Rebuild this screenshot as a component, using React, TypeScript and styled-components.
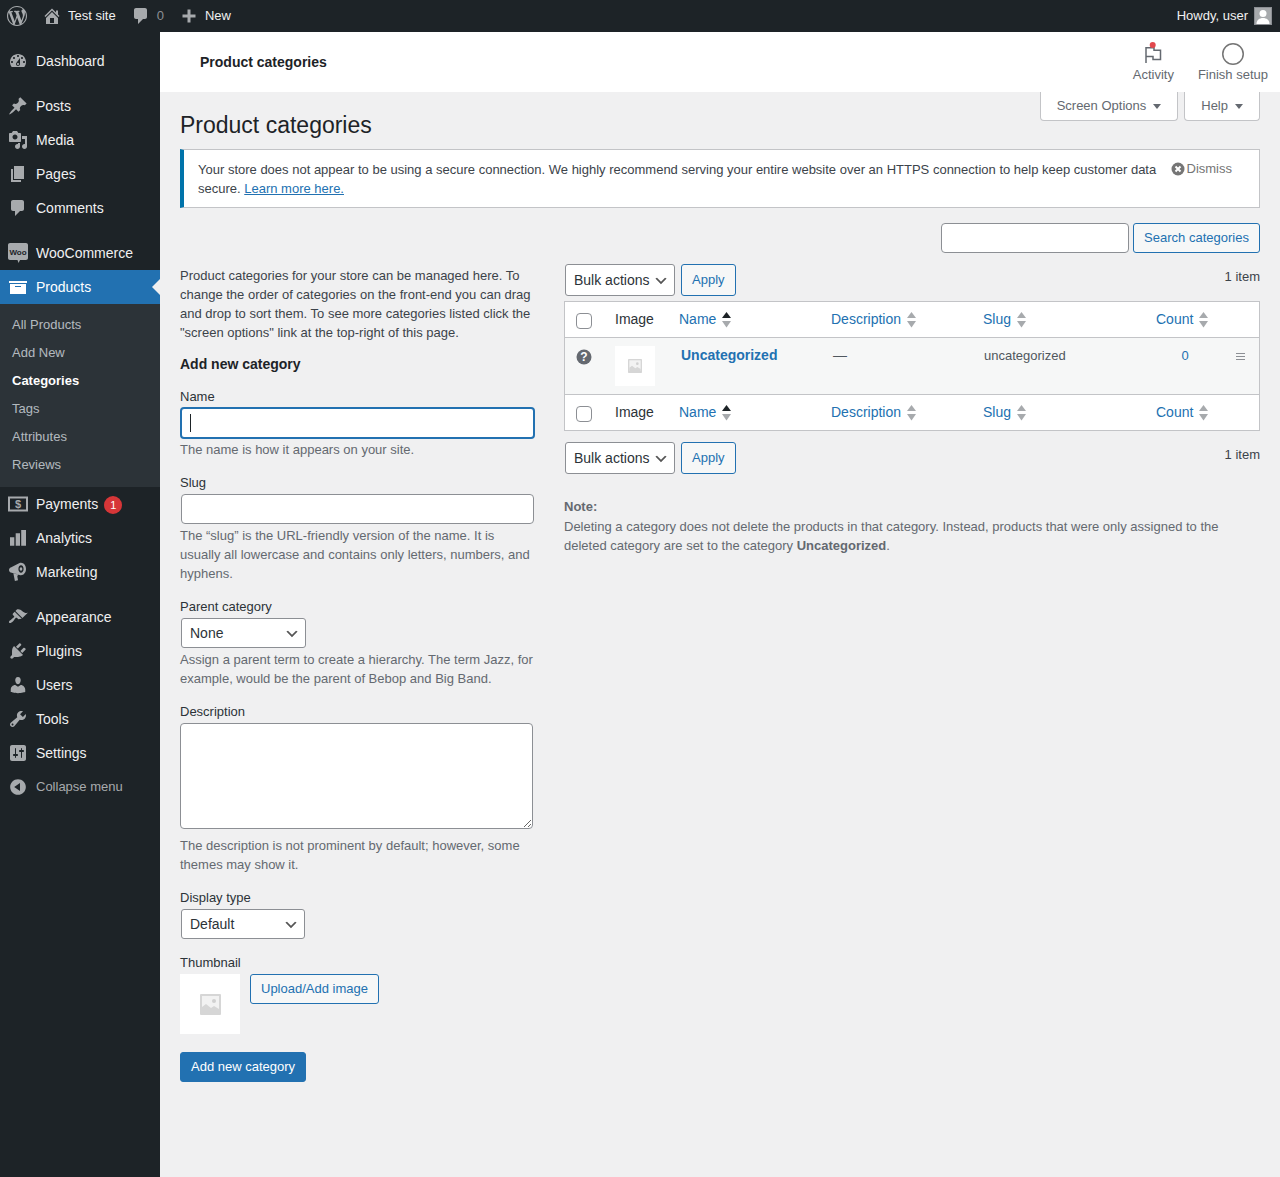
import { ReactNode } from 'react';
import styled, { createGlobalStyle } from 'styled-components';

const GlobalStyle = createGlobalStyle`
  html, body {
    margin: 0;
    padding: 0;
    background: #f0f0f1;
    font-family: "Liberation Sans", Arial, sans-serif;
    font-size: 13px;
    line-height: 19px;
    color: #3c434a;
  }
  * {
    box-sizing: border-box;
  }
`;

const chevron =
  "url(\"data:image/svg+xml,%3Csvg xmlns='http://www.w3.org/2000/svg' width='20' height='20' viewBox='0 0 20 20'%3E%3Cpath d='M5 6l5 5 5-5 2 1-7 7-7-7 2-1z' fill='%23555'/%3E%3C/svg%3E\")";

const Page = styled.div`
  min-height: 100vh;
  display: flex;
  flex-direction: column;
`;

const AdminBar = styled.header`
  flex: none;
  height: 32px;
  background: #1d2327;
  color: #f0f0f1;
  display: flex;
  align-items: center;
  padding: 0 8px 0 7px;
`;

const BarItem = styled.a<{ $left: number }>`
  display: flex;
  align-items: center;
  margin-left: ${(p) => p.$left}px;
  gap: 6px;
  color: #f0f0f1;
  svg {
    fill: #a7aaad;
    display: block;
  }
`;

const BarText = styled.span<{ $dim?: boolean }>`
  margin-top: -1px;
  color: ${(p) => (p.$dim ? '#8c8f94' : 'inherit')};
`;

const Howdy = styled.div`
  margin-left: auto;
  display: flex;
  align-items: center;
  gap: 6px;
`;

const Avatar = styled.span`
  width: 18px;
  height: 18px;
  background: #a7aaad;
  border: 1px solid #8c8f94;
  svg {
    display: block;
  }
`;

const Body = styled.div`
  flex: 1;
  display: flex;
`;

const Sidebar = styled.nav`
  flex: none;
  width: 160px;
  background: #1d2327;
  padding-top: 12px;
`;

const MenuItem = styled.a<{ $gap?: boolean; $active?: boolean }>`
  position: relative;
  display: flex;
  align-items: center;
  height: 34px;
  margin-top: ${(p) => (p.$gap ? 11 : 0)}px;
  font-size: 14px;
  color: ${(p) => (p.$active ? '#fff' : '#f0f0f1')};
  background: ${(p) => (p.$active ? '#2271b1' : 'transparent')};
  svg {
    fill: ${(p) => (p.$active ? '#fff' : '#a7aaad')};
  }
  ${(p) =>
    p.$active &&
    `&::after {
      content: '';
      position: absolute;
      right: 0;
      top: 9px;
      border: 8px solid transparent;
      border-right-color: #f0f0f1;
      border-left-width: 0;
    }`}
`;

const MenuIcon = styled.span`
  flex: none;
  width: 36px;
  display: flex;
  justify-content: center;
  svg {
    display: block;
  }
`;

const Badge = styled.span`
  width: 18px;
  height: 18px;
  margin: 2px 0 0 6px;
  border-radius: 50%;
  background: #d63638;
  color: #fff;
  font-size: 11px;
  line-height: 18px;
  text-align: center;
`;

const SubMenu = styled.div`
  background: #2c3338;
  padding: 7px 0;
  height: 183px;
`;

const SubItem = styled.a<{ $current?: boolean }>`
  display: block;
  height: 28px;
  line-height: 28px;
  padding-left: 12px;
  color: ${(p) => (p.$current ? '#fff' : 'rgba(240, 246, 252, 0.7)')};
  font-weight: ${(p) => (p.$current ? 600 : 400)};
`;

const Collapse = styled.a`
  display: flex;
  align-items: center;
  height: 32px;
  color: #a7aaad;
  svg {
    fill: #a7aaad;
    margin-top: 2px;
  }
`;

const Content = styled.main`
  flex: 1;
  min-width: 0;
`;

const HeaderBar = styled.div`
  height: 60px;
  background: #fff;
  display: flex;
  align-items: flex-start;
  padding: 0 12px 0 40px;
`;

const HeaderTitle = styled.div`
  font-size: 14px;
  font-weight: 600;
  color: #1d2327;
  margin-top: 21px;
`;

const HeaderLinks = styled.div`
  margin-left: auto;
  display: flex;
  gap: 24px;
`;

const HeaderLink = styled.a`
  display: flex;
  flex-direction: column;
  align-items: center;
  color: #646970;
  line-height: 19px;
  padding-top: 11px;
  svg {
    display: block;
    overflow: visible;
  }
`;

const Wrap = styled.div`
  padding: 0 20px;
`;

const TitleRow = styled.div`
  height: 57px;
  display: flex;
  justify-content: space-between;
  align-items: flex-start;
`;

const Title = styled.h1`
  margin: 18px 0 0;
  font-size: 23px;
  font-weight: 400;
  line-height: 30px;
  color: #1d2327;
`;

const ScreenTabs = styled.div`
  display: flex;
  gap: 6px;
`;

const ScreenTab = styled.button`
  height: 29px;
  padding: 0 16px 2px;
  display: flex;
  align-items: center;
  gap: 6px;
  background: #fff;
  border: 1px solid #c3c4c7;
  border-top: 0;
  border-radius: 0 0 4px 4px;
  font: inherit;
  color: #646970;
  &::after {
    content: '';
    border: 4px solid transparent;
    border-top: 5px solid #646970;
    border-bottom: 0;
    margin: 2px 0 0 1px;
  }
`;

const Notice = styled.div`
  display: flex;
  background: #fff;
  border: 1px solid #c3c4c7;
  border-left: 4px solid #0073aa;
  padding: 10px 27px 9px 14px;
`;

const NoticeText = styled.div`
  flex: 1;
  color: #3c434a;
  a {
    color: #2271b1;
    text-decoration: underline;
  }
`;

const Dismiss = styled.a`
  flex: none;
  display: flex;
  align-items: center;
  align-self: flex-start;
  margin: -1px 0 0 14px;
  height: 19px;
  gap: 2px;
  color: #757575;
  svg {
    display: block;
  }
`;

const SearchRow = styled.div`
  display: flex;
  justify-content: flex-end;
  gap: 4px;
  margin-top: 15px;
`;

const SearchInput = styled.input`
  width: 188px;
  height: 30px;
  background: #fff;
  border: 1px solid #8c8f94;
  border-radius: 4px;
`;

const Button = styled.button`
  height: 30px;
  padding: 0 10px 2px;
  background: #f6f7f7;
  border: 1px solid #2271b1;
  border-radius: 3px;
  color: #2271b1;
  font: inherit;
`;

const SearchButton = styled(Button)`
  width: 127px;
  padding-left: 0;
  padding-right: 0;
`;

const PrimaryButton = styled(Button)`
  background: #2271b1;
  color: #fff;
`;

const Columns = styled.div`
  display: flex;
  margin-top: 11px;
`;

const LeftColumn = styled.div`
  flex: none;
  width: 384px;
  padding: 2px 29px 0 0;
`;

const RightColumn = styled.div`
  flex: 1;
  min-width: 0;
`;

const Intro = styled.p`
  margin: 0;
  padding-right: 2px;
`;

const FormTitle = styled.h2`
  margin: 13px 0 14px;
  font-size: 14px;
  font-weight: 600;
  line-height: 18px;
  color: #1d2327;
`;

const Field = styled.div`
  margin-bottom: 14px;
`;

const Label = styled.label`
  display: block;
  color: #2c3338;
`;

const Help = styled.p`
  margin: 2px 0 0;
  color: #646970;
`;

const NameHelp = styled(Help)`
  margin-top: 1px;
`;

const FocusBox = styled.div`
  position: relative;
  margin-top: 1px;
  &::after {
    content: '';
    position: absolute;
    left: 10px;
    top: 7px;
    width: 1px;
    height: 18px;
    background: #1d2327;
  }
`;

const NameInput = styled.input`
  display: block;
  width: 355px;
  height: 32px;
  background: #fff;
  border: 2px solid #2271b1;
  border-radius: 4px;
  outline: none;
`;

const TextInput = styled.input`
  display: block;
  width: 353px;
  height: 30px;
  margin: 2px 0 0 1px;
  background: #fff;
  border: 1px solid #8c8f94;
  border-radius: 4px;
`;

const Select = styled.select<{ $width: number; $height?: number }>`
  display: block;
  width: ${(p) => p.$width}px;
  height: ${(p) => p.$height ?? 30}px;
  padding: 0 24px 0 8px;
  appearance: none;
  background: #fff ${chevron} no-repeat right 5px top 55%;
  background-size: 16px 16px;
  border: 1px solid #8c8f94;
  border-radius: 3px;
  color: #2c3338;
  font-family: inherit;
  font-size: 14px;
`;

const FieldSelect = styled(Select)`
  margin: 2px 0 0 1px;
`;

const TextArea = styled.textarea`
  display: block;
  width: 353px;
  height: 106px;
  margin-top: 2px;
  background: #fff;
  border: 1px solid #8c8f94;
  border-radius: 4px;
`;

const LongHelp = styled(Help)`
  margin-top: 7px;
`;

const ThumbRow = styled.div`
  display: flex;
  gap: 10px;
  margin-top: 2px;
`;

const ThumbBox = styled.div<{ $size: number }>`
  flex: none;
  width: ${(p) => p.$size}px;
  height: ${(p) => p.$size}px;
  background: #fff;
  display: flex;
  align-items: center;
  justify-content: center;
  svg {
    display: block;
  }
`;

const SubmitRow = styled.div`
  margin-top: 18px;
`;

const TableNav = styled.div`
  display: flex;
  align-items: flex-start;
  gap: 6px;
  padding-left: 1px;
`;

const ApplyButton = styled(Button)`
  height: 32px;
`;

const ItemCount = styled.div`
  margin-left: auto;
  margin-top: 4px;
  line-height: 18px;
`;

const Table = styled.table`
  width: 100%;
  table-layout: fixed;
  border-collapse: separate;
  border-spacing: 0;
  background: #fff;
  border: 1px solid #c3c4c7;
  margin: 5px 0 11px;
`;

const HeadCell = styled.th<{ $width?: number; $foot?: boolean; $pad?: number }>`
  width: ${(p) => (p.$width ? `${p.$width}px` : 'auto')};
  height: ${(p) => (p.$foot ? 35 : 36)}px;
  padding: 0 0 0 ${(p) => p.$pad ?? 10}px;
  border-bottom: ${(p) => (p.$foot ? 'none' : '1px solid #c3c4c7')};
  font-size: 14px;
  font-weight: 400;
  text-align: left;
  color: #2c3338;
  vertical-align: middle;
`;

const CheckBox = styled.input`
  appearance: none;
  display: block;
  width: 16px;
  height: 16px;
  margin: 2px 0 0;
  background: #fff;
  border: 1px solid #8c8f94;
  border-radius: 4px;
`;

const SortLink = styled.a`
  display: inline-flex;
  align-items: center;
  gap: 6px;
  color: #2271b1;
  svg {
    display: block;
    margin-top: 1px;
  }
`;

const BodyCell = styled.td<{ $center?: boolean; $pad?: number }>`
  height: 57px;
  padding: 8px 0 0 ${(p) => p.$pad ?? 12}px;
  background: #f6f7f7;
  border-bottom: 1px solid #c3c4c7;
  vertical-align: top;
  color: #50575e;
  text-align: ${(p) => (p.$center ? 'center' : 'left')};
  svg {
    display: block;
  }
`;

const HelpMark = styled.span`
  display: block;
  margin-top: 3px;
`;

const CategoryLink = styled.a`
  font-size: 14px;
  font-weight: 600;
  color: #2271b1;
`;

const CountLink = styled.a`
  color: #2271b1;
`;

const Dash = styled.span`
  font-size: 14px;
`;

const Handle = styled.span`
  display: block;
  width: 9px;
  height: 7px;
  margin-top: 7px;
  border-top: 1px solid #8c8f94;
  border-bottom: 1px solid #8c8f94;
  position: relative;
  &::after {
    content: '';
    position: absolute;
    left: 0;
    right: 0;
    top: 2px;
    height: 1px;
    background: #8c8f94;
  }
`;

const Note = styled.div`
  margin-top: 23px;
  color: #646970;
`;

const NoteTitle = styled.strong`
  display: block;
  margin-bottom: 1px;
`;

function Dashicon({ d, size = 20 }: { d: string; size?: number }) {
  return (
    <svg width={size} height={size} viewBox="0 0 20 20">
      <path d={d} fillRule="evenodd" />
    </svg>
  );
}

const icons = {
  wp: 'M20 10c0-5.51-4.49-10-10-10C4.48 0 0 4.49 0 10c0 5.52 4.48 10 10 10 5.51 0 10-4.48 10-10zM7.78 15.37L4.37 6.22c.55-.02 1.17-.08 1.17-.08.5-.06.44-1.13-.06-1.11 0 0-1.45.11-2.37.11-.18 0-.37 0-.58-.01C4.12 2.69 6.87 1.11 10 1.11c2.33 0 4.45.87 6.05 2.34-.68-.11-1.65.39-1.65 1.58 0 .74.45 1.36.9 2.1.35.61.55 1.36.55 2.46 0 1.49-1.4 5-1.4 5l-3.03-8.37c.54-.02.82-.17.82-.17.5-.05.44-1.25-.06-1.22 0 0-1.44.12-2.38.12-.87 0-2.33-.12-2.33-.12-.5-.03-.56 1.2-.06 1.22l.92.08 1.26 3.41zM17.41 10c.24-.64.74-1.87.43-4.25.7 1.29 1.05 2.71 1.05 4.25 0 3.29-1.73 6.24-4.4 7.78.97-2.59 1.94-5.2 2.92-7.78zM6.1 18.09C3.12 16.65 1.11 13.53 1.11 10c0-1.3.23-2.48.72-3.59C3.25 10.3 4.67 14.2 6.1 18.09zm4.03-6.63l2.58 6.98c-.86.29-1.76.45-2.71.45-.79 0-1.57-.11-2.29-.33.81-2.38 1.62-4.74 2.42-7.1z',
  home: 'M16 8.5l1.53 1.53-1.06 1.06L10 4.62l-6.47 6.47-1.06-1.06L10 2.5l4 4v-2h2v4zm-6-2.46l6 5.99V18H4v-5.97zM12 17v-5H8v5h4z',
  comment: 'M5 2h9c1.1 0 2 .9 2 2v7c0 1.1-.9 2-2 2h-2l-5 5v-5H5c-1.1 0-2-.9-2-2V4c0-1.1.9-2 2-2z',
  plus: 'M16.5 8.500v3h-5v5h-3v-5h-5v-3h5v-5h3v5h5z',
  dashboard: 'M3.76 16h12.48c1.1-1.37 1.76-3.11 1.76-5 0-4.42-3.58-8-8-8s-8 3.58-8 8c0 1.89.66 3.63 1.76 5zM10 4c.55 0 1 .45 1 1s-.45 1-1 1-1-.45-1-1 .45-1 1-1zM6 6c.55 0 1 .45 1 1s-.45 1-1 1-1-.45-1-1 .45-1 1-1zm8 0c.55 0 1 .45 1 1s-.45 1-1 1-1-.45-1-1 .45-1 1-1zm-5.37 5.55L12 7v6c0 1.1-.9 2-2 2s-2-.9-2-2c0-.57.24-1.08.63-1.45zM4 10c.55 0 1 .45 1 1s-.45 1-1 1-1-.45-1-1 .45-1 1-1zm12 0c.55 0 1 .45 1 1s-.45 1-1 1-1-.45-1-1 .45-1 1-1zm-5 3c0-.55-.45-1-1-1s-1 .45-1 1 .45 1 1 1 1-.45 1-1z',
  pin: 'M10.44 3.02l1.82-1.82 6.36 6.35-1.83 1.82c-1.05-.68-2.48-.57-3.41.36l-.75.75c-.92.93-1.04 2.35-.35 3.41l-1.83 1.82-2.41-2.41-2.8 2.79c-.42.42-3.38 2.71-3.8 2.29s1.86-3.39 2.28-3.81l2.79-2.79L4.1 9.36l1.83-1.82c1.05.69 2.48.57 3.4-.36l.75-.75c.93-.92 1.05-2.35.36-3.41z',
  media: 'M13 11V4c0-.55-.45-1-1-1h-1.67L9 1H5L3.67 3H2c-.55 0-1 .45-1 1v7c0 .55.45 1 1 1h10c.55 0 1-.45 1-1zM7 4.5c1.38 0 2.5 1.12 2.5 2.5S8.38 9.5 7 9.5 4.5 8.38 4.5 7 5.62 4.5 7 4.5zM14 6h5v10.5c0 1.38-1.12 2.5-2.5 2.5S14 17.88 14 16.5s1.12-2.5 2.5-2.5c.17 0 .34.02.5.05V9h-3V6zm-4 8.05V13h2v3.5c0 1.38-1.12 2.5-2.5 2.5S7 17.88 7 16.5 8.12 14 9.5 14c.17 0 .34.02.5.05z',
  page: 'M6 15V2h10v13H6zm-1 1h8v2H3V5h2v11z',
  archive: 'M19 4v2H1V4h18zM2 7h16v10H2V7zm11 3V9H7v1h6z',
  analytics: 'M2 9.300h4.300v8.400H2zM7.700 5.300H12v12.400H7.700zM13.200 2H18v15.700h-4.800z',
  megaphone: 'M13 .8c2.800 0 5 2.800 5 6.200s-2.200 6.200-5 6.200c-.5 0-1-.1-1.500-.3L2.800 10.500C1.700 10.200 1 9.200 1 8s.7-2.200 1.800-2.500L11.500 1.100c.5-.2 1-.3 1.500-.3zM13 3.300c-1.500 0-2.600 1.700-2.600 3.700s1.100 3.700 2.600 3.700 2.600-1.700 2.600-3.700-1.100-3.700-2.600-3.700zM13 5.300c.8 0 1.300.8 1.300 1.700s-.5 1.700-1.300 1.700-1.300-.8-1.300-1.700.5-1.700 1.300-1.700zM5.300 11l4.900 1.400-.9 1.800.7 4.100-3.100.7z',
  brush: 'M14.48 11.06L7.41 3.99l1.5-1.5c.5-.56 2.3-.47 3.51.32 1.21.8 1.43 1.28 2.91 2.1 1.18.64 2.45 1.26 4.45.85zm-.71.71L6.7 4.7 4.93 6.47c-.39.39-.39 1.02 0 1.41l1.06 1.06c.39.39.39 1.03 0 1.42-.6.6-1.43 1.11-2.21 1.69-.35.26-.7.53-1.01.84C1.43 13.23.4 14.99 1.2 15.8c.8.8 2.57-.23 3.91-1.57.31-.31.58-.66.85-1.02.57-.78 1.08-1.61 1.69-2.21.39-.39 1.02-.39 1.41 0l1.06 1.06c.39.39 1.02.39 1.41 0z',
  plugin: 'M13.11 4.36L9.87 7.6 8 5.73l3.24-3.24c.35-.34 1.05-.2 1.56.32.52.51.66 1.21.31 1.55zm-8 1.77l.91-1.12 9.01 9.01-1.19.84c-.71.71-2.63 1.16-3.82 1.16H6.14L4.9 17.26c-.59.59-1.54.59-2.12 0-.59-.58-.59-1.53 0-2.12l1.24-1.24v-3.88c0-1.13.4-3.19 1.09-3.89zm7.26 3.97l3.24-3.24c.34-.35 1.04-.21 1.55.31.52.51.66 1.21.31 1.55l-3.24 3.25z',
  users: 'M10 9.25c-2.27 0-2.73-3.44-2.73-3.44C7 4.02 7.82 2 9.97 2c2.16 0 2.98 2.02 2.71 3.81 0 0-.41 3.44-2.68 3.44zm0 2.57L12.72 10c2.39 0 4.52 2.33 4.52 4.53v2.49s-3.65 1.13-7.24 1.13c-3.65 0-7.24-1.13-7.24-1.13v-2.49c0-2.25 1.94-4.48 4.47-4.48z',
  tools: 'M16.68 9.77c-1.34 1.34-3.3 1.67-4.95.99l-5.41 6.52c-.99.99-2.59.99-3.58 0s-.99-2.59 0-3.57l6.52-5.42c-.68-1.65-.35-3.61.99-4.95 1.28-1.28 3.12-1.62 4.72-1.06l-2.89 2.89 2.82 2.82 2.86-2.87c.53 1.58.18 3.39-1.08 4.65zM3.81 16.21c.4.39 1.04.39 1.43 0 .4-.4.4-1.04 0-1.43-.39-.4-1.03-.4-1.43 0-.39.39-.39 1.03 0 1.43z',
  settings: 'M18 16V4c0-1.1-.9-2-2-2H4c-1.1 0-2 .9-2 2v12c0 1.1.9 2 2 2h12c1.1 0 2-.9 2-2zM8 11h1c.55 0 1 .45 1 1s-.45 1-1 1H8v1.5c0 .28-.22.5-.5.5s-.5-.22-.5-.5V13H6c-.55 0-1-.45-1-1s.45-1 1-1h1V5.5c0-.28.22-.5.5-.5s.5.22.5.5V11zm5-2h-1c-.55 0-1-.45-1-1s.45-1 1-1h1V5.5c0-.28.22-.5.5-.5s.5.22.5.5V7h1c.55 0 1 .45 1 1s-.45 1-1 1h-1v5.5c0 .28-.22.5-.5.5s-.5-.22-.5-.5V9z',
  collapse: 'M10 2.16c4.33 0 7.84 3.51 7.84 7.84s-3.51 7.84-7.84 7.84S2.16 14.33 2.16 10 5.71 2.16 10 2.16zm2 11.72V6.12L6.18 9.97z',
};

function WooIcon() {
  return (
    <svg width="20" height="20" viewBox="0 0 20 20">
      <path d="M2 0h16c1.100 0 2 .9 2 2v13c0 1.100-.9 2-2 2h-6l-1.500 3-1-3H2c-1.100 0-2-.9-2-2V2C0 .9.900 0 2 0z" />
      <text x="10" y="12" textAnchor="middle" fontSize="8" fontWeight="700" fill="#1d2327" fontFamily="Liberation Sans">
        Woo
      </text>
    </svg>
  );
}

function PaymentsIcon() {
  return (
    <svg width="20" height="16" viewBox="0 0 20 16">
      <path d="M0 .500h20v15H0zM2 2.500v11h16v-11z" fillRule="evenodd" />
      <text x="10" y="12" textAnchor="middle" fontSize="11" fontWeight="700" fill="#a7aaad" fontFamily="Liberation Sans">
        $
      </text>
    </svg>
  );
}

function FlagIcon() {
  return (
    <svg width="24" height="22" viewBox="0 0 24 22" fill="none">
      <path d="M5 4v16M5 4.700h8V7.200h6.500v9.300H12v-3H5" stroke="#646970" strokeWidth="1.500" />
      <circle cx="11.700" cy="2" r="3" fill="#e2484d" />
    </svg>
  );
}

function CircleIcon() {
  return (
    <svg width="22" height="22" viewBox="0 0 22 22" fill="none">
      <circle cx="11" cy="11" r="10.250" stroke="#757575" strokeWidth="1.500" />
    </svg>
  );
}

function DismissIcon() {
  return (
    <svg width="14" height="14" viewBox="0 0 14 14">
      <circle cx="7" cy="7" r="6.500" fill="#757575" />
      <path d="M4.500 4.500l5 5M9.500 4.500l-5 5" stroke="#fff" strokeWidth="2" />
    </svg>
  );
}

function HelpIcon() {
  return (
    <svg width="16" height="16" viewBox="0 0 16 16">
      <circle cx="8" cy="8" r="7.500" fill="#646970" />
      <text x="8" y="12" textAnchor="middle" fontSize="12" fontWeight="700" fill="#fff" fontFamily="Liberation Sans">
        ?
      </text>
    </svg>
  );
}

function PlaceholderIcon({ size }: { size: number }) {
  return (
    <svg width={size} height={size} viewBox="0 0 21 21">
      <rect width="21" height="21" rx="1" fill="#d6d6d6" />
      <rect x="2" y="2" width="17" height="16" fill="#f2f2f2" />
      <circle cx="14" cy="7" r="2" fill="#d0d0d0" />
      <path d="M2 13l4-3 5 4 3-2 5 3v6H2z" fill="#d6d6d6" />
    </svg>
  );
}

function SortIcon({ active }: { active?: boolean }) {
  return (
    <svg width="9" height="16" viewBox="0 0 9 16">
      <path d="M0 6l4.500-6L9 6z" fill={active ? '#1d2327' : '#a7aaad'} />
      <path d="M0 9h9l-4.500 6.500z" fill="#a7aaad" />
    </svg>
  );
}

function AvatarIcon() {
  return (
    <svg width="16" height="16" viewBox="0 0 16 16" fill="#fff">
      <circle cx="8" cy="5.500" r="3.500" />
      <path d="M1.500 16c0-4 3-6 6.500-6s6.500 2 6.500 6z" />
    </svg>
  );
}

function Nav({ icon, children, gap, active }: { icon: ReactNode; children: ReactNode; gap?: boolean; active?: boolean }) {
  return (
    <MenuItem $gap={gap} $active={active}>
      <MenuIcon>{icon}</MenuIcon>
      {children}
    </MenuItem>
  );
}

function HeaderRow({ foot }: { foot?: boolean }) {
  return (
    <tr>
      <HeadCell $width={40} $foot={foot} $pad={11}>
        <CheckBox type="checkbox" />
      </HeadCell>
      <HeadCell $width={64} $foot={foot}>Image</HeadCell>
      <HeadCell $width={152} $foot={foot}>
        <SortLink>Name <SortIcon active /></SortLink>
      </HeadCell>
      <HeadCell $width={151} $foot={foot}>
        <SortLink>Description <SortIcon /></SortLink>
      </HeadCell>
      <HeadCell $width={163} $foot={foot} $pad={11}>
        <SortLink>Slug <SortIcon /></SortLink>
      </HeadCell>
      <HeadCell $width={100} $foot={foot} $pad={21}>
        <SortLink>Count <SortIcon /></SortLink>
      </HeadCell>
      <HeadCell $width={24} $foot={foot} />
    </tr>
  );
}

function BulkBar() {
  return (
    <TableNav>
      <Select $width={110} $height={32} defaultValue="bulk">
        <option value="bulk">Bulk actions</option>
      </Select>
      <ApplyButton type="button">Apply</ApplyButton>
      <ItemCount>1 item</ItemCount>
    </TableNav>
  );
}

export default function App() {
  return (
    <Page>
      <GlobalStyle />
      <AdminBar>
        <BarItem $left={0}><Dashicon d={icons.wp} /></BarItem>
        <BarItem $left={15}><Dashicon d={icons.home} /><BarText>Test site</BarText></BarItem>
        <BarItem $left={15}><Dashicon d={icons.comment} /><BarText $dim>0</BarText></BarItem>
        <BarItem $left={15}><Dashicon d={icons.plus} /><BarText>New</BarText></BarItem>
        <Howdy>
          <BarText>Howdy, user</BarText>
          <Avatar><AvatarIcon /></Avatar>
        </Howdy>
      </AdminBar>
      <Body>
        <Sidebar>
          <Nav icon={<Dashicon d={icons.dashboard} />}>Dashboard</Nav>
          <Nav gap icon={<Dashicon d={icons.pin} />}>Posts</Nav>
          <Nav icon={<Dashicon d={icons.media} />}>Media</Nav>
          <Nav icon={<Dashicon d={icons.page} />}>Pages</Nav>
          <Nav icon={<Dashicon d={icons.comment} />}>Comments</Nav>
          <Nav gap icon={<WooIcon />}>WooCommerce</Nav>
          <Nav active icon={<Dashicon d={icons.archive} />}>Products</Nav>
          <SubMenu>
            <SubItem>All Products</SubItem>
            <SubItem>Add New</SubItem>
            <SubItem $current>Categories</SubItem>
            <SubItem>Tags</SubItem>
            <SubItem>Attributes</SubItem>
            <SubItem>Reviews</SubItem>
          </SubMenu>
          <Nav icon={<PaymentsIcon />}>Payments<Badge>1</Badge></Nav>
          <Nav icon={<Dashicon d={icons.analytics} />}>Analytics</Nav>
          <Nav icon={<Dashicon d={icons.megaphone} />}>Marketing</Nav>
          <Nav gap icon={<Dashicon d={icons.brush} />}>Appearance</Nav>
          <Nav icon={<Dashicon d={icons.plugin} />}>Plugins</Nav>
          <Nav icon={<Dashicon d={icons.users} />}>Users</Nav>
          <Nav icon={<Dashicon d={icons.tools} />}>Tools</Nav>
          <Nav icon={<Dashicon d={icons.settings} />}>Settings</Nav>
          <Collapse>
            <MenuIcon><Dashicon d={icons.collapse} /></MenuIcon>
            Collapse menu
          </Collapse>
        </Sidebar>
        <Content>
          <HeaderBar>
            <HeaderTitle>Product categories</HeaderTitle>
            <HeaderLinks>
              <HeaderLink><FlagIcon />Activity</HeaderLink>
              <HeaderLink><CircleIcon />Finish setup</HeaderLink>
            </HeaderLinks>
          </HeaderBar>
          <Wrap>
            <TitleRow>
              <Title>Product categories</Title>
              <ScreenTabs>
                <ScreenTab type="button">Screen Options</ScreenTab>
                <ScreenTab type="button">Help</ScreenTab>
              </ScreenTabs>
            </TitleRow>
            <Notice>
              <NoticeText>
                Your store does not appear to be using a secure connection. We highly recommend serving your entire
                website over an HTTPS connection to help keep customer data secure. <a>Learn more here.</a>
              </NoticeText>
              <Dismiss><DismissIcon />Dismiss</Dismiss>
            </Notice>
            <SearchRow>
              <SearchInput type="search" />
              <SearchButton type="button">Search categories</SearchButton>
            </SearchRow>
            <Columns>
              <LeftColumn>
                <Intro>
                  Product categories for your store can be managed here. To change the order of categories on the
                  front-end you can drag and drop to sort them. To see more categories listed click the "screen
                  options" link at the top-right of this page.
                </Intro>
                <FormTitle>Add new category</FormTitle>
                <Field>
                  <Label>Name</Label>
                  <FocusBox><NameInput type="text" /></FocusBox>
                  <NameHelp>The name is how it appears on your site.</NameHelp>
                </Field>
                <Field>
                  <Label>Slug</Label>
                  <TextInput type="text" />
                  <Help>
                    The “slug” is the URL-friendly version of the name. It is usually all lowercase and contains only
                    letters, numbers, and hyphens.
                  </Help>
                </Field>
                <Field>
                  <Label>Parent category</Label>
                  <FieldSelect $width={125} defaultValue="none">
                    <option value="none">None</option>
                  </FieldSelect>
                  <Help>
                    Assign a parent term to create a hierarchy. The term Jazz, for example, would be the parent of
                    Bebop and Big Band.
                  </Help>
                </Field>
                <Field>
                  <Label>Description</Label>
                  <TextArea />
                  <LongHelp>
                    The description is not prominent by default; however, some themes may show it.
                  </LongHelp>
                </Field>
                <Field>
                  <Label>Display type</Label>
                  <FieldSelect $width={124} defaultValue="default">
                    <option value="default">Default</option>
                  </FieldSelect>
                </Field>
                <Field>
                  <Label>Thumbnail</Label>
                  <ThumbRow>
                    <ThumbBox $size={60}><PlaceholderIcon size={21} /></ThumbBox>
                    <Button type="button">Upload/Add image</Button>
                  </ThumbRow>
                </Field>
                <SubmitRow>
                  <PrimaryButton type="button">Add new category</PrimaryButton>
                </SubmitRow>
              </LeftColumn>
              <RightColumn>
                <BulkBar />
                <Table>
                  <thead><HeaderRow /></thead>
                  <tbody>
                    <tr>
                      <BodyCell $pad={11}><HelpMark><HelpIcon /></HelpMark></BodyCell>
                      <BodyCell $pad={10}>
                        <ThumbBox $size={40}><PlaceholderIcon size={14} /></ThumbBox>
                      </BodyCell>
                      <BodyCell><CategoryLink>Uncategorized</CategoryLink></BodyCell>
                      <BodyCell><Dash>—</Dash></BodyCell>
                      <BodyCell>uncategorized</BodyCell>
                      <BodyCell $center $pad={0}><CountLink>0</CountLink></BodyCell>
                      <BodyCell $pad={1}><Handle /></BodyCell>
                    </tr>
                  </tbody>
                  <tfoot><HeaderRow foot /></tfoot>
                </Table>
                <BulkBar />
                <Note>
                  <NoteTitle>Note:</NoteTitle>
                  Deleting a category does not delete the products in that category. Instead, products that were only
                  assigned to the deleted category are set to the category <strong>Uncategorized</strong>.
                </Note>
              </RightColumn>
            </Columns>
          </Wrap>
        </Content>
      </Body>
    </Page>
  );
}
